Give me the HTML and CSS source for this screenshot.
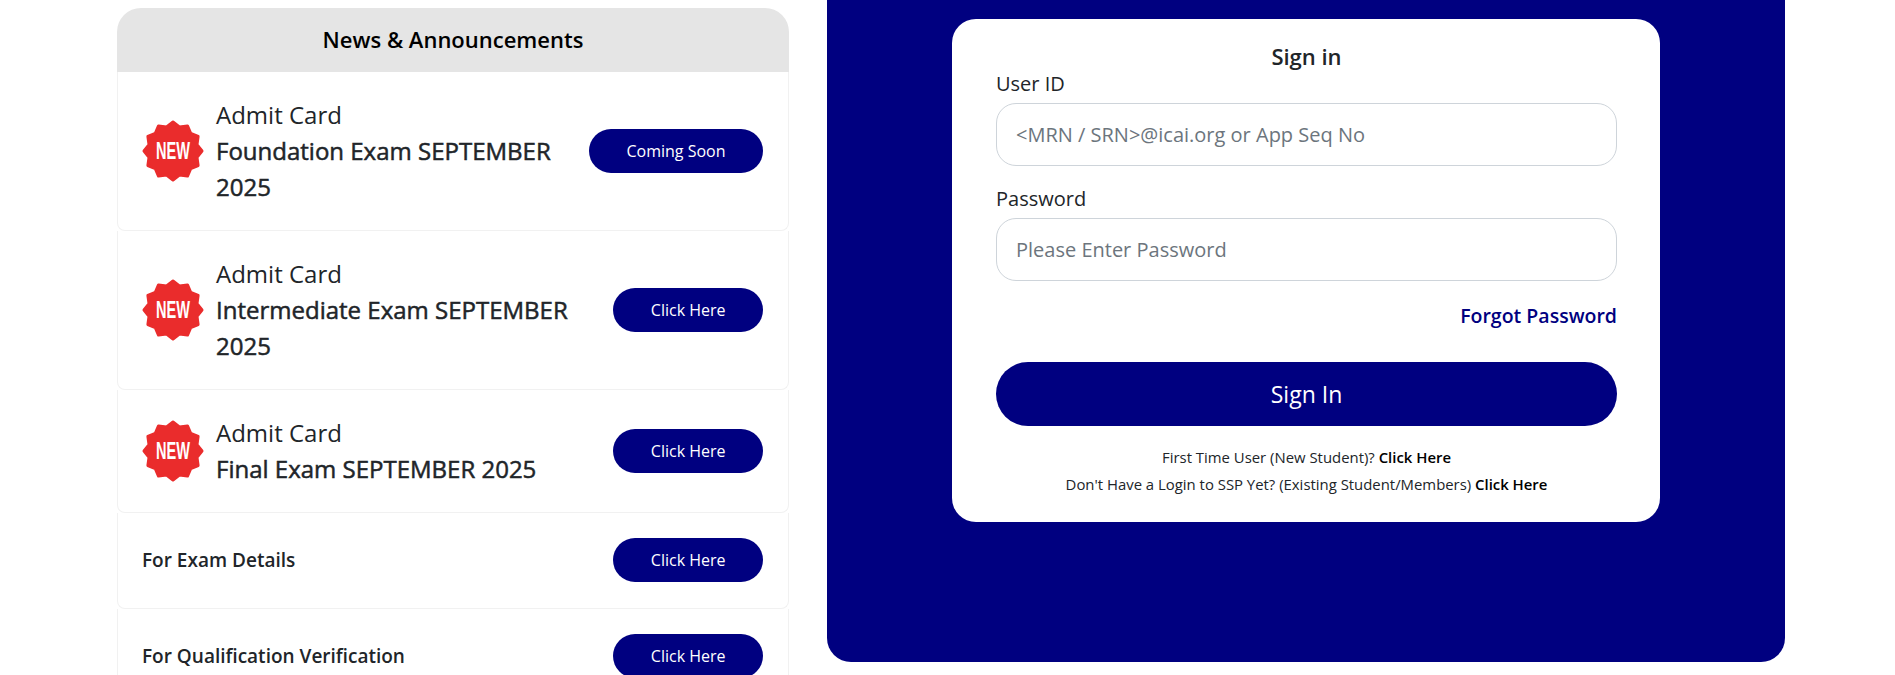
FILE: index.html
```html
<!DOCTYPE html>
<html lang="en">
<head>
  <meta charset="UTF-8">
  <title>Student Portal</title>
  <meta name="viewport" content="width=device-width, initial-scale=1.0">
  <link rel="stylesheet" href="styles.css">
</head>
<body>

<div class="page">
  <section class="news">
    <h2 class="news-title">News &amp; Announcements</h2>

    <div class="news-row">
      <div class="news-info">
        <svg class="new-badge" viewBox="-31 -31 62 62"><polygon class="burst" points="29,0 24,6.4 25.1,14.5 17.7,17.7 14.5,25.1 6.4,24 0,29 -6.4,24 -14.5,25.1 -17.7,17.7 -25.1,14.5 -24,6.4 -29,0 -24,-6.4 -25.1,-14.5 -17.7,-17.7 -14.5,-25.1 -6.4,-24 0,-29 6.4,-24 14.5,-25.1 17.7,-17.7 25.1,-14.5 24,-6.4"/><text class="burst-text" x="0" y="6.5" transform="scale(1 1.3)" text-anchor="middle" textLength="34" lengthAdjust="spacingAndGlyphs">NEW</text></svg>
        <div class="news-text">
          <div class="news-kind">Admit Card</div>
          <div class="news-name">Foundation Exam SEPTEMBER 2025</div>
        </div>
      </div>
      <a class="pill-btn" href="#">Coming Soon</a>
    </div>

    <div class="news-row">
      <div class="news-info">
        <svg class="new-badge" viewBox="-31 -31 62 62"><polygon class="burst" points="29,0 24,6.4 25.1,14.5 17.7,17.7 14.5,25.1 6.4,24 0,29 -6.4,24 -14.5,25.1 -17.7,17.7 -25.1,14.5 -24,6.4 -29,0 -24,-6.4 -25.1,-14.5 -17.7,-17.7 -14.5,-25.1 -6.4,-24 0,-29 6.4,-24 14.5,-25.1 17.7,-17.7 25.1,-14.5 24,-6.4"/><text class="burst-text" x="0" y="6.5" transform="scale(1 1.3)" text-anchor="middle" textLength="34" lengthAdjust="spacingAndGlyphs">NEW</text></svg>
        <div class="news-text">
          <div class="news-kind">Admit Card</div>
          <div class="news-name">Intermediate Exam SEPTEMBER 2025</div>
        </div>
      </div>
      <a class="pill-btn" href="#">Click Here</a>
    </div>

    <div class="news-row">
      <div class="news-info">
        <svg class="new-badge" viewBox="-31 -31 62 62"><polygon class="burst" points="29,0 24,6.4 25.1,14.5 17.7,17.7 14.5,25.1 6.4,24 0,29 -6.4,24 -14.5,25.1 -17.7,17.7 -25.1,14.5 -24,6.4 -29,0 -24,-6.4 -25.1,-14.5 -17.7,-17.7 -14.5,-25.1 -6.4,-24 0,-29 6.4,-24 14.5,-25.1 17.7,-17.7 25.1,-14.5 24,-6.4"/><text class="burst-text" x="0" y="6.5" transform="scale(1 1.3)" text-anchor="middle" textLength="34" lengthAdjust="spacingAndGlyphs">NEW</text></svg>
        <div class="news-text">
          <div class="news-kind">Admit Card</div>
          <div class="news-name">Final Exam SEPTEMBER 2025</div>
        </div>
      </div>
      <a class="pill-btn" href="#">Click Here</a>
    </div>

    <div class="news-row plain">
      <div class="news-label">For Exam Details</div>
      <a class="pill-btn" href="#">Click Here</a>
    </div>

    <div class="news-row plain">
      <div class="news-label">For Qualification Verification</div>
      <a class="pill-btn" href="#">Click Here</a>
    </div>
  </section>

  <section class="login-panel">
    <form class="login-card">
      <h3 class="login-title">Sign in</h3>

      <label class="login-label" for="userId">User ID</label>
      <input class="login-input" type="text" id="userId" placeholder="<MRN / SRN>@icai.org or App Seq No">

      <label class="login-label second" for="password">Password</label>
      <input class="login-input" type="password" id="password" placeholder="Please Enter Password">

      <div class="forgot"><a href="#">Forgot Password</a></div>

      <button class="login-btn" type="button">Sign In</button>

      <p class="login-note">First Time User (New Student)? <a href="#">Click Here</a></p>
      <p class="login-note">Don't Have a Login to SSP Yet? (Existing Student/Members) <a href="#">Click Here</a></p>
    </form>
  </section>
</div>

</body>
</html>
```

FILE: styles.css
```css
html, body {
  margin: 0;
  height: 675px;
  overflow: hidden;
  background: #fff;
}
body {
  font-family: "Open Sans", sans-serif;
  color: #212529;
}
a {
  text-decoration: none;
}
.page {
  display: flex;
  align-items: flex-start;
  gap: 38px;
  padding-left: 117px;
}
.news {
  width: 672px;
  flex: none;
  margin-top: 8px;
}
.news-title {
  margin: 0;
  height: 64px;
  line-height: 63px;
  text-align: center;
  font-size: 22px;
  font-weight: 600;
  color: #000;
  background: #e5e5e5;
  border-radius: 24px 24px 0 0;
}
.news-row {
  display: flex;
  align-items: center;
  justify-content: space-between;
  gap: 16px;
  padding: 25px 25px 25px 24px;
  border: 1px solid #f1f1f1;
  border-top: 0;
  border-radius: 0 0 8px 8px;
}
.news-row.plain {
  padding-bottom: 26px;
}
.news-info {
  display: flex;
  align-items: center;
  gap: 12px;
}
.new-badge {
  width: 62px;
  height: 62px;
  flex: none;
}
.burst {
  fill: #ea2c2c;
  stroke: #ea2c2c;
  stroke-width: 3;
  stroke-linejoin: round;
}
.burst-text {
  fill: #fff;
  font-family: "Liberation Sans", sans-serif;
  font-size: 18px;
  font-weight: 700;
}
.news-kind {
  font-size: 24px;
  line-height: 36px;
}
.news-name {
  font-size: 24px;
  line-height: 36px;
  -webkit-text-stroke: 0.5px #212529;
}
.news-label {
  font-size: 19px;
  font-weight: 600;
}
.pill-btn {
  flex: none;
  height: 44px;
  line-height: 44px;
  padding: 0 37.5px;
  border-radius: 22px;
  background: #000080;
  color: #fff;
  font-size: 16px;
}
.login-panel {
  width: 958px;
  height: 662px;
  flex: none;
  box-sizing: border-box;
  padding: 19px 0 0 125px;
  background: #000080;
  border-radius: 0 0 24px 24px;
}
.login-card {
  width: 708px;
  height: 503px;
  box-sizing: border-box;
  padding: 24px 43px 0 44px;
  background: #fff;
  border-radius: 24px;
}
.login-title {
  margin: 0;
  text-align: center;
  font-size: 22px;
  line-height: 27px;
  font-weight: 600;
  color: #212529;
}
.login-label {
  display: block;
  font-size: 20px;
  line-height: 28px;
  margin-bottom: 5px;
}
.login-label.second {
  margin-top: 19px;
}
.login-input {
  display: block;
  width: 100%;
  height: 63px;
  box-sizing: border-box;
  padding: 0 19px;
  border: 1px solid #ced4da;
  border-radius: 20px;
  font-family: inherit;
  font-size: 20px;
  color: #212529;
  background: #fff;
}
.login-input::placeholder {
  color: #6c757d;
}
.forgot {
  margin-top: 20px;
  text-align: right;
  font-size: 19.5px;
  line-height: 30px;
}
.forgot a {
  color: #000080;
  font-weight: 600;
}
.login-btn {
  display: block;
  width: 100%;
  height: 64px;
  margin-top: 31px;
  border: 0;
  border-radius: 32px;
  background: #000080;
  color: #fff;
  font-family: inherit;
  font-size: 23px;
}
.login-note {
  margin: 0;
  text-align: center;
  font-size: 14.9px;
  line-height: 27px;
}
.login-btn + .login-note {
  margin-top: 18px;
}
.login-note a {
  color: #000;
  font-weight: 600;
}
```
